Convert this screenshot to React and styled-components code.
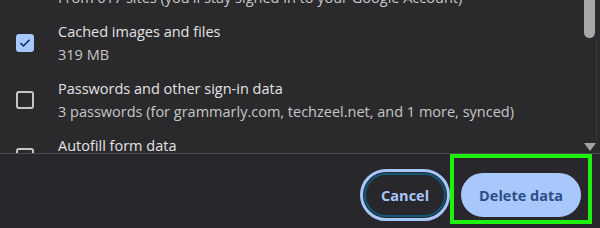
import React from 'react';
import styled, { createGlobalStyle } from 'styled-components';

const GlobalStyle = createGlobalStyle`
  html, body {
    margin: 0;
    padding: 0;
    background: #2a2a2c;
  }
  body {
    font-family: "Open Sans", "Noto Sans", sans-serif;
  }
`;

const Dialog = styled.div`
  width: 600px;
  height: 228px;
  display: flex;
  flex-direction: column;
  background: #2a2a2c;
  overflow: hidden;
`;

const ScrollArea = styled.div`
  position: relative;
  height: 153px;
  overflow: hidden;
  border-bottom: 1px solid #4b4b4e;
`;

const List = styled.div`
  display: flex;
  flex-direction: column;
  margin-top: -42px;
`;

const Row = styled.label`
  display: flex;
  align-items: center;
  gap: 24px;
  padding: 5px 0 6px 16px;
`;

const Box = styled.span`
  flex: none;
  width: 18px;
  height: 18px;
  box-sizing: border-box;
  border-radius: 3px;
  display: flex;
  align-items: center;
  justify-content: center;
  border: 2px solid ${(p) => (p.checked ? '#a8c7fa' : '#c4c7c5')};
  background: ${(p) => (p.checked ? '#a8c7fa' : 'transparent')};
`;

const Texts = styled.div`
  display: flex;
  flex-direction: column;
`;

const Title = styled.div`
  font-size: 14.5px;
  line-height: 23px;
  color: #e3e3e3;
  white-space: nowrap;
`;

const Sub = styled.div`
  font-size: 14.5px;
  line-height: 23px;
  color: #c7c7c7;
  white-space: nowrap;
`;

const Thumb = styled.div`
  position: absolute;
  right: 5px;
  top: -10px;
  width: 11px;
  height: 48px;
  border-radius: 0 0 6px 6px;
  background: #a8a8a8;
`;

const Track = styled.div`
  position: absolute;
  right: 3px;
  top: 40px;
  width: 1px;
  height: 100px;
  background: #3c3c3f;
`;

const Arrow = styled.div`
  position: absolute;
  right: 4px;
  top: 143px;
  width: 0;
  height: 0;
  border-left: 6px solid transparent;
  border-right: 6px solid transparent;
  border-top: 8px solid #a3a3a3;
`;

const Footer = styled.div`
  position: relative;
  flex: 1;
  display: flex;
  justify-content: flex-end;
  align-items: flex-start;
  gap: 15px;
  padding: 19px 19px 0 0;
  background: #28272c;
`;

const Button = styled.button`
  height: 44px;
  box-sizing: border-box;
  border-radius: 22px;
  font-family: "Open Sans", "Noto Sans", sans-serif;
  font-size: 14.5px;
  font-weight: 700;
  padding: 0 ${(p) => (p.primary ? '16px' : '15px')};
  border: 2px solid ${(p) => (p.primary ? '#a8c7fa' : '#0f5a78')};
  background: ${(p) => (p.primary ? '#a8c7fa' : 'transparent')};
  color: ${(p) => (p.primary ? '#2d4f88' : '#a8c7fa')};
  outline: ${(p) => (p.focused ? '3px solid #a8c7fa' : 'none')};
  outline-offset: 1px;
  cursor: pointer;
`;

const Highlight = styled.div`
  position: absolute;
  left: 450px;
  top: 0;
  width: 142px;
  height: 70px;
  box-sizing: border-box;
  border: 4px solid #1ff20f;
  pointer-events: none;
`;

const items = [
  { title: 'Cookies and other site data', sub: "From 617 sites (you'll stay signed in to your Google Account)", checked: false },
  { title: 'Cached images and files', sub: '319 MB', checked: true },
  { title: 'Passwords and other sign-in data', sub: '3 passwords (for grammarly.com, techzeel.net, and 1 more, synced)', checked: false },
  { title: 'Autofill form data', sub: 'None', checked: false },
];

function Check() {
  return (
    <svg width="12" height="10" viewBox="0 0 12 10">
      <path d="M1.5 5.2 L4.5 8 L10.5 1.8" fill="none" stroke="#062e6f" strokeWidth="1.6" />
    </svg>
  );
}

export default function App() {
  return (
    <>
      <GlobalStyle />
      <Dialog>
        <ScrollArea>
          <List>
            {items.map((it) => (
              <Row key={it.title}>
                <Box checked={it.checked}>{it.checked && <Check />}</Box>
                <Texts>
                  <Title>{it.title}</Title>
                  <Sub>{it.sub}</Sub>
                </Texts>
              </Row>
            ))}
          </List>
          <Thumb />
          <Track />
          <Arrow />
        </ScrollArea>
        <Footer>
          <Button focused>Cancel</Button>
          <Button primary>Delete data</Button>
          <Highlight />
        </Footer>
      </Dialog>
    </>
  );
}
